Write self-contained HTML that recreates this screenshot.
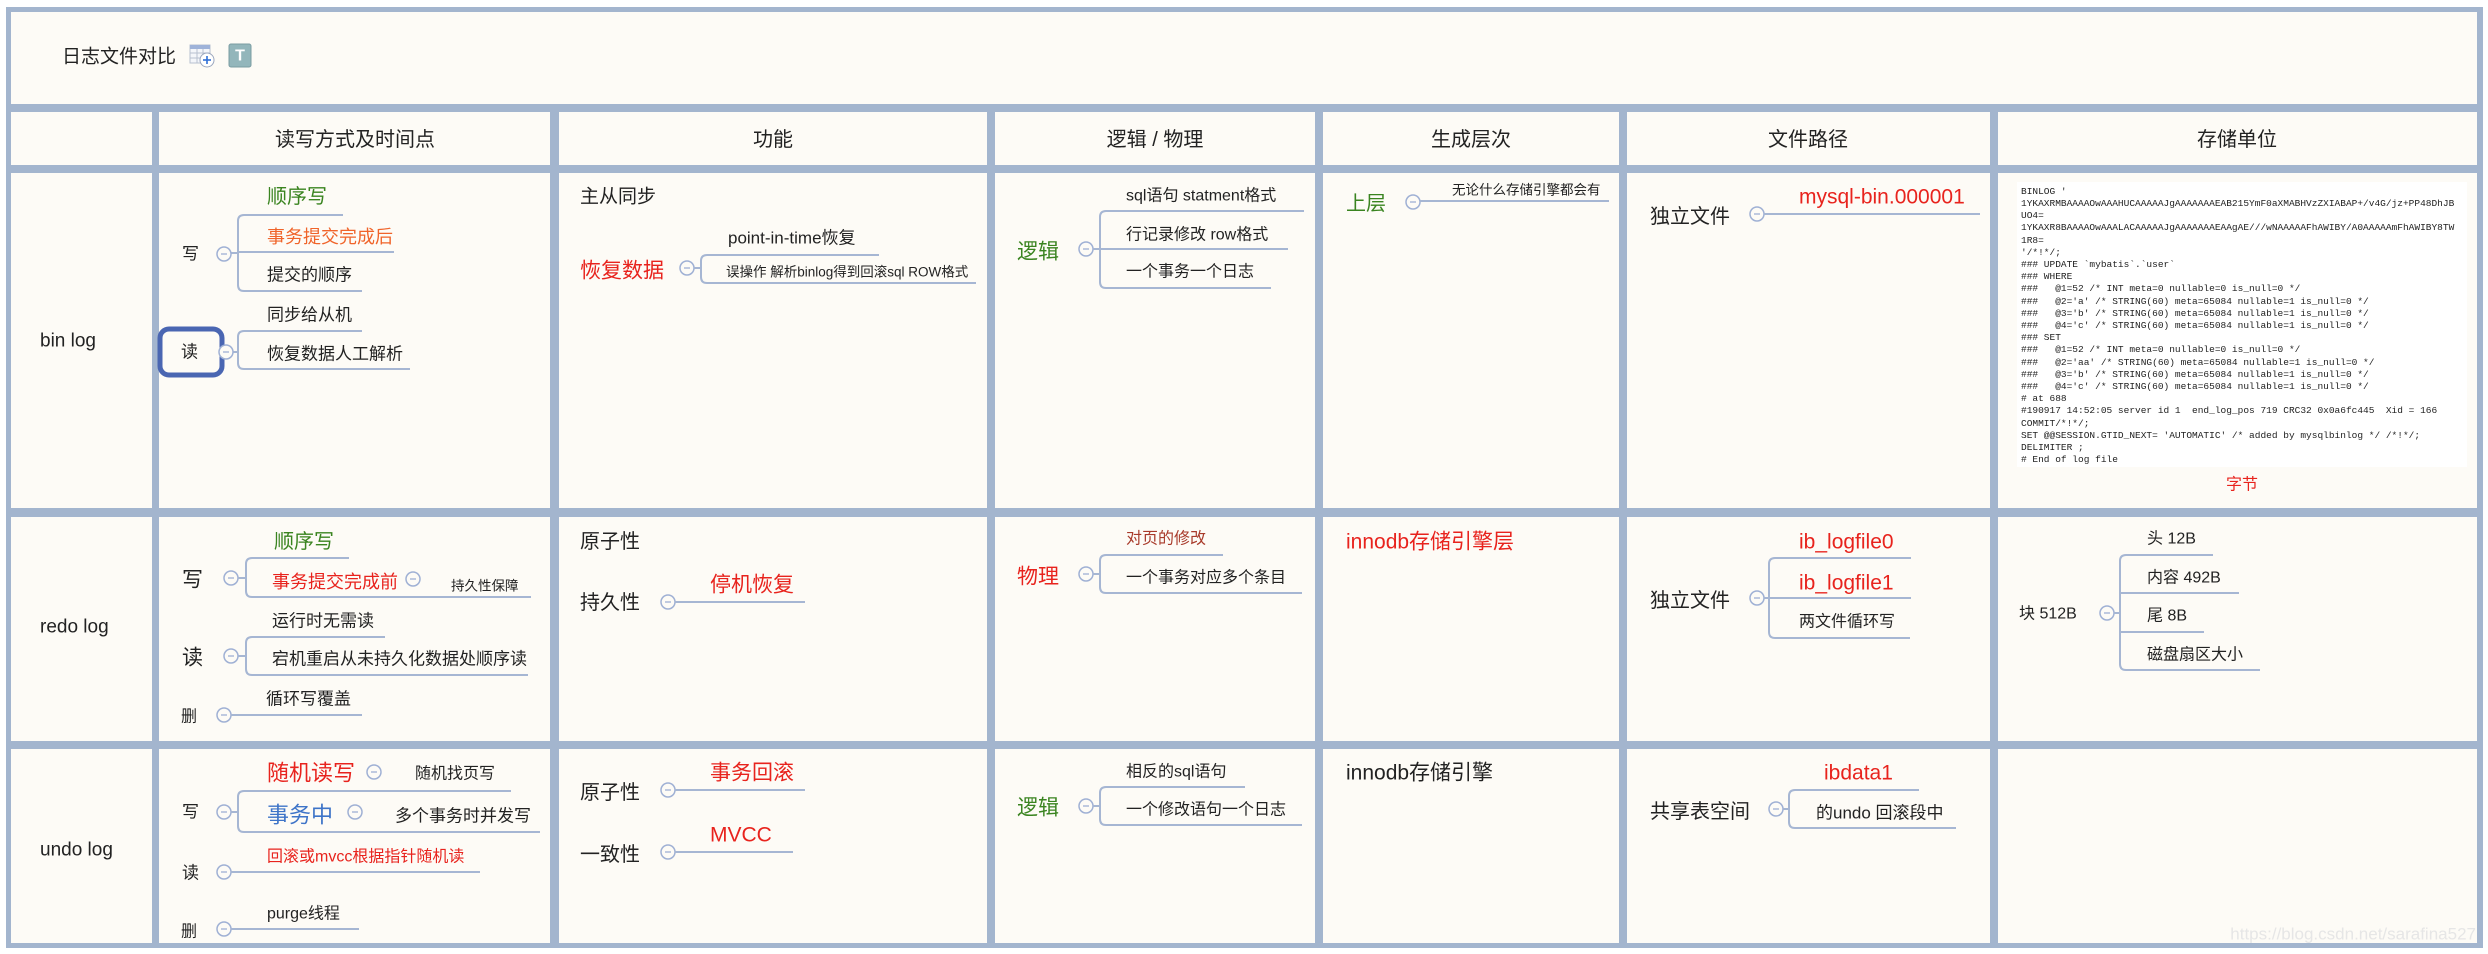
<!DOCTYPE html>
<html><head><meta charset="utf-8"><style>
html,body{margin:0;padding:0;background:#fff;}
svg{display:block;}
text{font-family:"Liberation Sans","Noto Sans CJK SC",sans-serif;fill:#222;dominant-baseline:central;}
.m text{font-family:"Liberation Mono",monospace;font-size:9.5px;fill:#222;dominant-baseline:auto;white-space:pre;}
.g{fill:#3a8420}.r{fill:#e8231d}.o{fill:#f0642a}.b{fill:#3e74c8}.br{fill:#a83a2a}
.ln{fill:none;stroke:#a6b6d3;stroke-width:2;}
</style></head><body>
<svg width="2488" height="954" viewBox="0 0 2488 954" xmlns="http://www.w3.org/2000/svg">
<defs>
<g id="c"><circle r="7" fill="#fdfbf6" stroke="#9fb0d4" stroke-width="1.5"/><line x1="-3" x2="3" y1="0" y2="0" stroke="#9fb0d4" stroke-width="1.3"/></g>
</defs>
<rect x="6" y="7" width="2477" height="941" fill="#a3b5ce"/>
<g fill="#fdfbf6">
<rect x="11" y="12" width="2466" height="92"/>
<rect x="11" y="112" width="141" height="53"/><rect x="159" y="112" width="391" height="53"/><rect x="559" y="112" width="428" height="53"/><rect x="995" y="112" width="320" height="53"/><rect x="1323" y="112" width="296" height="53"/><rect x="1627" y="112" width="363" height="53"/><rect x="1998" y="112" width="479" height="53"/>
<rect x="11" y="173" width="141" height="335"/><rect x="159" y="173" width="391" height="335"/><rect x="559" y="173" width="428" height="335"/><rect x="995" y="173" width="320" height="335"/><rect x="1323" y="173" width="296" height="335"/><rect x="1627" y="173" width="363" height="335"/><rect x="1998" y="173" width="479" height="335"/>
<rect x="11" y="517" width="141" height="224"/><rect x="159" y="517" width="391" height="224"/><rect x="559" y="517" width="428" height="224"/><rect x="995" y="517" width="320" height="224"/><rect x="1323" y="517" width="296" height="224"/><rect x="1627" y="517" width="363" height="224"/><rect x="1998" y="517" width="479" height="224"/>
<rect x="11" y="749" width="141" height="194"/><rect x="159" y="749" width="391" height="194"/><rect x="559" y="749" width="428" height="194"/><rect x="995" y="749" width="320" height="194"/><rect x="1323" y="749" width="296" height="194"/><rect x="1627" y="749" width="363" height="194"/><rect x="1998" y="749" width="479" height="194"/>
</g>
<text x="62" y="57" font-size="19">日志文件对比</text>
<g>
<rect x="190" y="45" width="20" height="18" fill="#f4f6fa" stroke="#b8c0d0" stroke-width="1"/>
<rect x="190" y="45" width="20" height="4" fill="#9fb3d9"/>
<line x1="190" y1="53" x2="210" y2="53" stroke="#b8c0d0"/><line x1="190" y1="58" x2="210" y2="58" stroke="#b8c0d0"/><line x1="197" y1="49" x2="197" y2="63" stroke="#b8c0d0"/><line x1="203" y1="49" x2="203" y2="63" stroke="#b8c0d0"/>
<circle cx="207" cy="60" r="7" fill="#fff" stroke="#9aa6bd"/>
<line x1="203" y1="60" x2="211" y2="60" stroke="#2f6fd6" stroke-width="1.6"/><line x1="207" y1="56" x2="207" y2="64" stroke="#2f6fd6" stroke-width="1.6"/>
<rect x="229" y="44" width="22" height="23" rx="2" fill="#93b6bb" stroke="#7a9ca2"/>
<text x="240" y="56" font-size="16" font-weight="bold" text-anchor="middle" style="fill:#fff">T</text>
</g>
<g font-size="20" text-anchor="middle">
<text x="355" y="140">读写方式及时间点</text>
<text x="773" y="140">功能</text>
<text x="1155" y="140">逻辑 / 物理</text>
<text x="1471" y="140">生成层次</text>
<text x="1808" y="140">文件路径</text>
<text x="2237" y="140">存储单位</text>
</g>
<text x="40" y="341" font-size="19">bin log</text>
<text x="40" y="627" font-size="19">redo log</text>
<text x="40" y="850" font-size="19">undo log</text>

<path class="ln" d="M343,215 H244 Q238,215 238,221 V285 Q238,291 244,291 H362 M238,252 H394 M231,253 H238"/>
<use href="#c" x="224" y="254"/>
<text x="182" y="254" font-size="17">写</text>
<text x="267" y="197" font-size="20" class="g">顺序写</text>
<text x="267" y="237" font-size="18" class="o">事务提交完成后</text>
<text x="267" y="275" font-size="17">提交的顺序</text>
<path class="ln" d="M362,331 H244 Q238,331 238,337 V363 Q238,369 244,369 H410 M231,352 H238"/>
<rect x="160" y="329" width="62" height="46" rx="9" fill="#fdfbf6" stroke="#4a66b2" stroke-width="5"/>
<use href="#c" x="226" y="352"/>
<text x="181" y="352" font-size="17">读</text>
<text x="267" y="315" font-size="17">同步给从机</text>
<text x="267" y="354" font-size="17">恢复数据人工解析</text>

<text x="580" y="197" font-size="19">主从同步</text>
<text x="580" y="271" font-size="21" class="r">恢复数据</text>
<use href="#c" x="687" y="268"/>
<path class="ln" d="M694,268 H701 M879,255 H707 Q701,255 701,261 V277 Q701,283 707,283 H976"/>
<text x="728" y="238" font-size="17">point-in-time恢复</text>
<text x="726" y="272" font-size="13.5">误操作 解析binlog得到回滚sql ROW格式</text>

<text x="1017" y="252" font-size="21" class="g">逻辑</text>
<use href="#c" x="1086" y="249"/>
<path class="ln" d="M1093,249 H1288 M1304,211 H1106 Q1100,211 1100,217 V282 Q1100,288 1106,288 H1271"/>
<text x="1126" y="196" font-size="16">sql语句 statment格式</text>
<text x="1126" y="235" font-size="16">行记录修改 row格式</text>
<text x="1126" y="272" font-size="16">一个事务一个日志</text>

<text x="1346" y="204" font-size="20" class="g">上层</text>
<use href="#c" x="1413" y="202"/>
<path class="ln" d="M1420,201 H1609"/>
<text x="1452" y="190" font-size="13.5">无论什么存储引擎都会有</text>

<text x="1650" y="217" font-size="20">独立文件</text>
<use href="#c" x="1757" y="214"/>
<path class="ln" d="M1764,214 H1980"/>
<text x="1799" y="197" font-size="21" class="r">mysql-bin.000001</text>

<rect x="2017" y="182" width="450" height="285" fill="#fff"/>
<g class="m">
<text x="2021" y="194">BINLOG '</text>
<text x="2021" y="206">1YKAXRMBAAAAOwAAAHUCAAAAAJgAAAAAAAEAB215YmF0aXMABHVzZXIABAP+/v4G/jz+PP48DhJB</text>
<text x="2021" y="218">UO4=</text>
<text x="2021" y="230">1YKAXR8BAAAAOwAAALACAAAAAJgAAAAAAAEAAgAE///wNAAAAAFhAWIBY/A0AAAAAmFhAWIBY8TW</text>
<text x="2021" y="243">1R8=</text>
<text x="2021" y="255">'/*!*/;</text>
<text x="2021" y="267">### UPDATE `mybatis`.`user`</text>
<text x="2021" y="279">### WHERE</text>
<text x="2021" y="291">###   @1=52 /* INT meta=0 nullable=0 is_null=0 */</text>
<text x="2021" y="304">###   @2='a' /* STRING(60) meta=65084 nullable=1 is_null=0 */</text>
<text x="2021" y="316">###   @3='b' /* STRING(60) meta=65084 nullable=1 is_null=0 */</text>
<text x="2021" y="328">###   @4='c' /* STRING(60) meta=65084 nullable=1 is_null=0 */</text>
<text x="2021" y="340">### SET</text>
<text x="2021" y="352">###   @1=52 /* INT meta=0 nullable=0 is_null=0 */</text>
<text x="2021" y="365">###   @2='aa' /* STRING(60) meta=65084 nullable=1 is_null=0 */</text>
<text x="2021" y="377">###   @3='b' /* STRING(60) meta=65084 nullable=1 is_null=0 */</text>
<text x="2021" y="389">###   @4='c' /* STRING(60) meta=65084 nullable=1 is_null=0 */</text>
<text x="2021" y="401"># at 688</text>
<text x="2021" y="413">#190917 14:52:05 server id 1  end_log_pos 719 CRC32 0x0a6fc445  Xid = 166</text>
<text x="2021" y="426">COMMIT/*!*/;</text>
<text x="2021" y="438">SET @@SESSION.GTID_NEXT= 'AUTOMATIC' /* added by mysqlbinlog */ /*!*/;</text>
<text x="2021" y="450">DELIMITER ;</text>
<text x="2021" y="462"># End of log file</text>
</g>
<text x="2242" y="485" font-size="16" class="r" text-anchor="middle">字节</text>

<text x="274" y="542" font-size="20" class="g">顺序写</text>
<text x="182" y="580" font-size="21">写</text>
<use href="#c" x="231" y="578"/>
<path class="ln" d="M238,578 H246 M349,558 H252 Q246,558 246,564 V591 Q246,597 252,597 H531"/>
<text x="272" y="582" font-size="18" class="r">事务提交完成前</text>
<use href="#c" x="413" y="579"/>
<text x="451" y="586" font-size="13.5">持久性保障</text>
<text x="272" y="621" font-size="17">运行时无需读</text>
<text x="182" y="658" font-size="21">读</text>
<use href="#c" x="231" y="656"/>
<path class="ln" d="M238,656 H246 M385,637 H252 Q246,637 246,643 V669 Q246,675 252,675 H528"/>
<text x="272" y="659" font-size="17">宕机重启从未持久化数据处顺序读</text>
<text x="181" y="717" font-size="16">删</text>
<use href="#c" x="224" y="715"/>
<path class="ln" d="M231,715 H362"/>
<text x="266" y="699" font-size="17">循环写覆盖</text>

<text x="580" y="542" font-size="20">原子性</text>
<text x="580" y="603" font-size="20">持久性</text>
<use href="#c" x="668" y="602"/>
<path class="ln" d="M675,602 H805"/>
<text x="710" y="585" font-size="21" class="r">停机恢复</text>

<text x="1017" y="577" font-size="21" class="r">物理</text>
<use href="#c" x="1086" y="574"/>
<path class="ln" d="M1093,574 H1100 M1223,555 H1106 Q1100,555 1100,561 V587 Q1100,593 1106,593 H1302"/>
<text x="1126" y="539" font-size="16" class="br">对页的修改</text>
<text x="1126" y="578" font-size="16">一个事务对应多个条目</text>

<text x="1346" y="542" font-size="21" class="r">innodb存储引擎层</text>

<text x="1650" y="601" font-size="20">独立文件</text>
<use href="#c" x="1757" y="598"/>
<path class="ln" d="M1764,598 H1911 M1911,558 H1775 Q1769,558 1769,564 V632 Q1769,638 1775,638 H1910"/>
<text x="1799" y="542" font-size="21" class="r">ib_logfile0</text>
<text x="1799" y="583" font-size="21" class="r">ib_logfile1</text>
<text x="1799" y="622" font-size="16">两文件循环写</text>

<text x="2019" y="614" font-size="16">块 512B</text>
<use href="#c" x="2107" y="613"/>
<path class="ln" d="M2114,613 H2120 M2213,555 H2126 Q2120,555 2120,561 V664 Q2120,670 2126,670 H2260 M2120,593 H2239 M2120,632 H2204"/>
<text x="2147" y="539" font-size="16">头 12B</text>
<text x="2147" y="578" font-size="16">内容 492B</text>
<text x="2147" y="616" font-size="16">尾 8B</text>
<text x="2147" y="655" font-size="16">磁盘扇区大小</text>

<text x="267" y="773" font-size="22" class="r">随机读写</text>
<use href="#c" x="374" y="772"/>
<text x="415" y="774" font-size="16">随机找页写</text>
<text x="182" y="812" font-size="17">写</text>
<use href="#c" x="224" y="812"/>
<path class="ln" d="M231,812 H238 M511,791 H244 Q238,791 238,797 V826 Q238,832 244,832 H540"/>
<text x="267" y="815" font-size="22" class="b">事务中</text>
<use href="#c" x="355" y="812"/>
<text x="395" y="816" font-size="17">多个事务时并发写</text>
<text x="182" y="873" font-size="17">读</text>
<use href="#c" x="224" y="872"/>
<path class="ln" d="M231,872 H480"/>
<text x="267" y="857" font-size="16" class="r">回滚或mvcc根据指针随机读</text>
<text x="181" y="932" font-size="16">删</text>
<use href="#c" x="224" y="929"/>
<path class="ln" d="M231,929 H359"/>
<text x="267" y="914" font-size="16">purge线程</text>

<text x="580" y="793" font-size="20">原子性</text>
<use href="#c" x="668" y="790"/>
<path class="ln" d="M675,790 H805"/>
<text x="710" y="773" font-size="21" class="r">事务回滚</text>
<text x="580" y="855" font-size="20">一致性</text>
<use href="#c" x="668" y="852"/>
<path class="ln" d="M675,852 H793"/>
<text x="710" y="835" font-size="21" class="r">MVCC</text>

<text x="1017" y="808" font-size="21" class="g">逻辑</text>
<use href="#c" x="1086" y="806"/>
<path class="ln" d="M1093,806 H1100 M1245,787 H1106 Q1100,787 1100,793 V819 Q1100,825 1106,825 H1302"/>
<text x="1126" y="772" font-size="16">相反的sql语句</text>
<text x="1126" y="810" font-size="16">一个修改语句一个日志</text>

<text x="1346" y="773" font-size="21">innodb存储引擎</text>

<text x="1650" y="812" font-size="20">共享表空间</text>
<use href="#c" x="1776" y="809"/>
<path class="ln" d="M1783,809 H1789 M1919,790 H1795 Q1789,790 1789,796 V822 Q1789,828 1795,828 H1956"/>
<text x="1824" y="773" font-size="21" class="r">ibdata1</text>
<text x="1816" y="813" font-size="17">的undo 回滚段中</text>

<text x="2476" y="934" font-size="17" text-anchor="end" style="fill:#e6e6e6">https://blog.csdn.net/sarafina527</text>
</svg>
</body></html>
